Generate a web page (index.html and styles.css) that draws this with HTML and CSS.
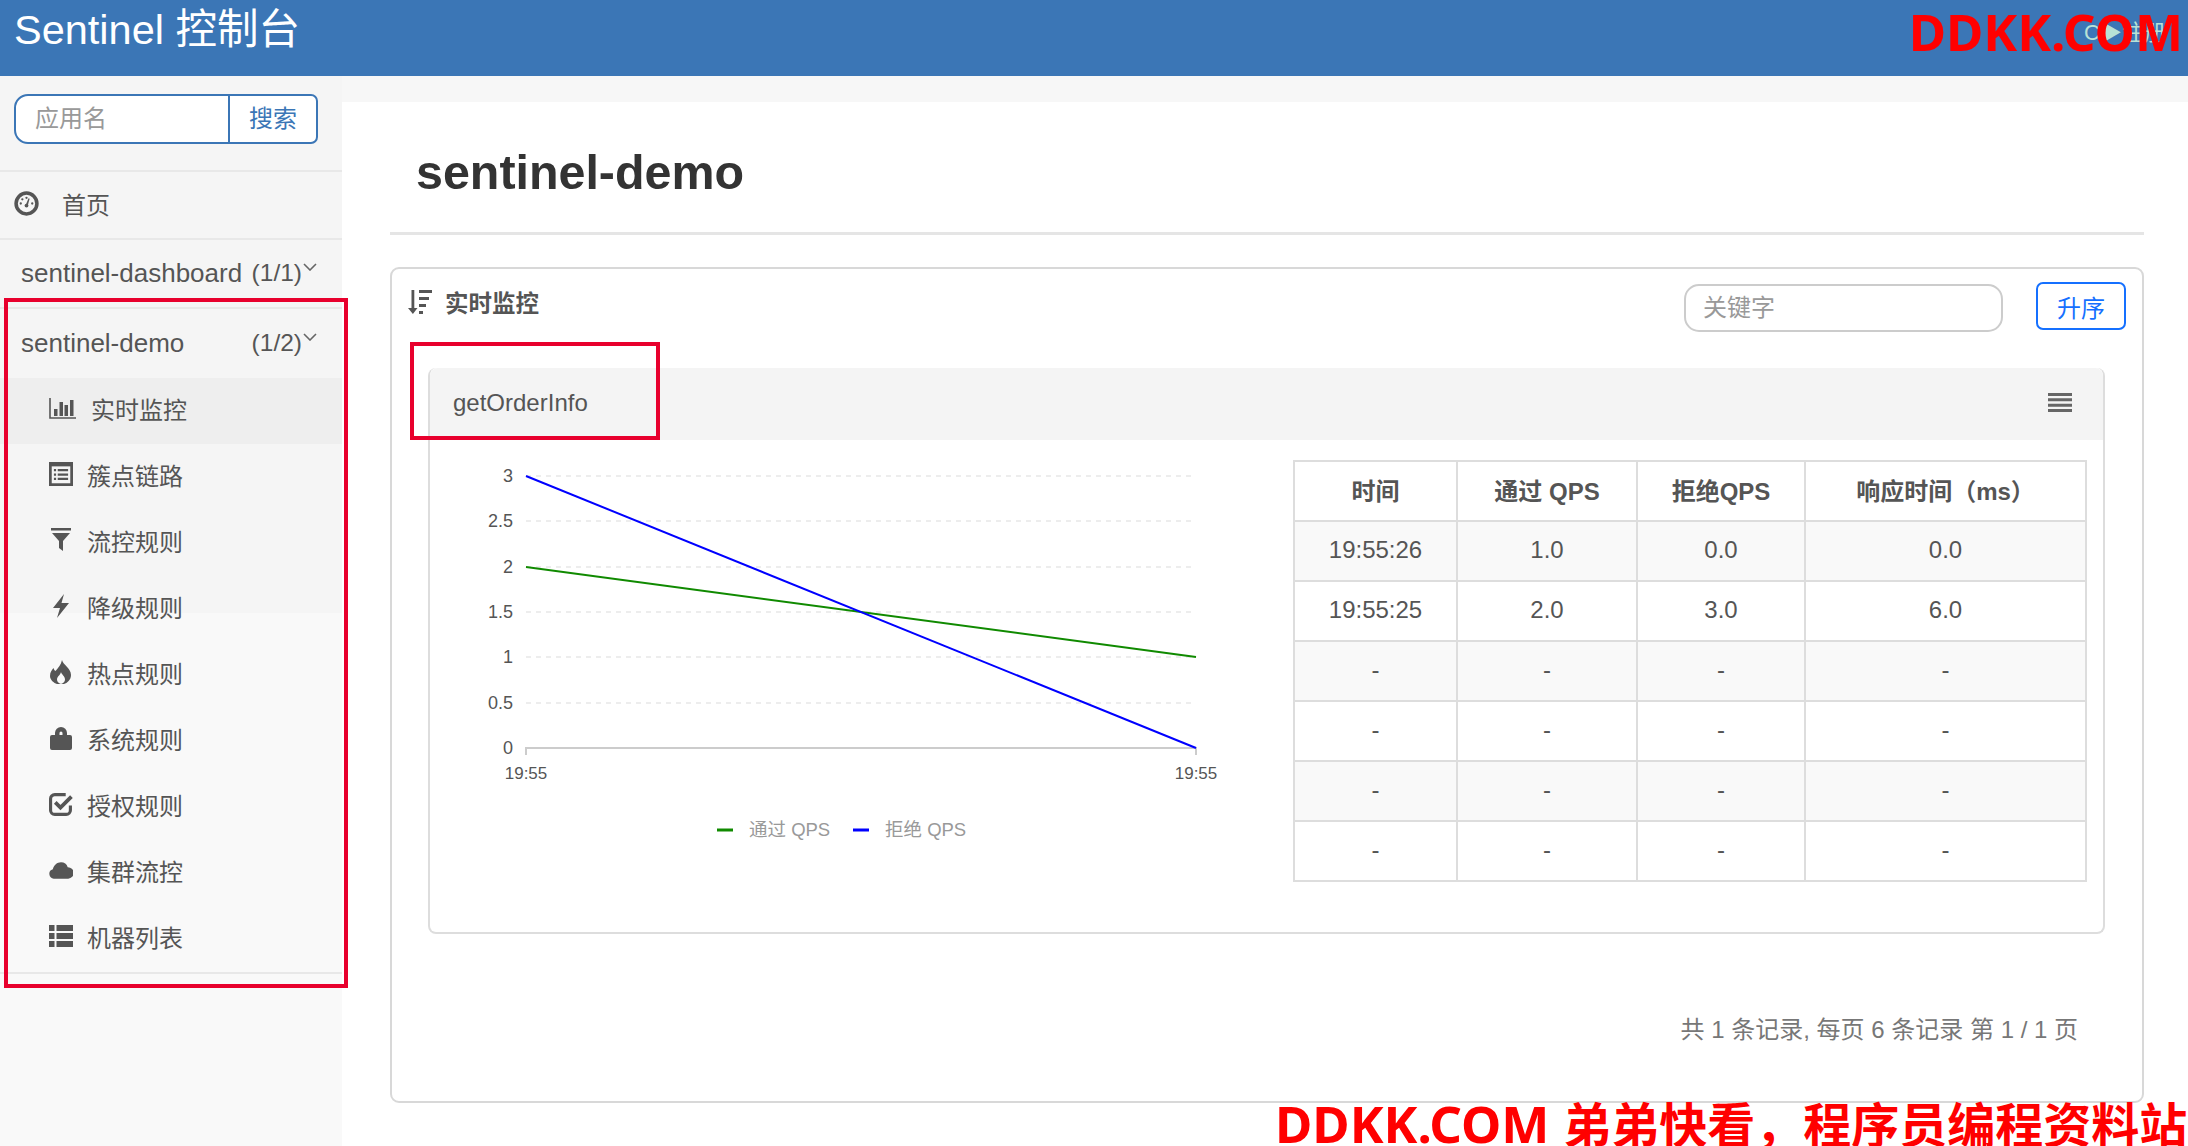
FILE: index.html
```html
<!DOCTYPE html>
<html lang="zh">
<head>
<meta charset="utf-8">
<title>Sentinel 控制台</title>
<link rel="stylesheet" href="styles.css">
</head>
<body>
<header class="topbar">
  <div class="brand">Sentinel 控制台</div>
  <div class="faint">C▶注册</div>
</header>
<div class="layout">
  <aside class="sidebar">
    <div class="search-wrap">
      <div class="search">
        <div class="search-input">应用名</div>
        <div class="search-btn">搜索</div>
      </div>
    </div>
    <div class="home">
      <svg class="home-icon" viewBox="0 0 24 24"><circle cx="12" cy="12" r="10" fill="none" stroke="#555" stroke-width="3.4"/><path d="M11 14l3-7 1 .4-2 7.2z" fill="#555"/><circle cx="12" cy="14" r="1.8" fill="#555"/><circle cx="6.5" cy="12" r="1.1" fill="#555"/><circle cx="8" cy="8" r="1.1" fill="#555"/><circle cx="12" cy="6.5" r="1.1" fill="#555"/><circle cx="17.5" cy="12" r="1.1" fill="#555"/></svg>
      <span>首页</span>
    </div>
    <div class="app app-first">
      <span class="app-name">sentinel-dashboard</span><span class="app-count">(1/1)</span>
      <svg class="chev" viewBox="0 0 14 8"><path d="M1 1l6 6 6-6" fill="none" stroke="#666" stroke-width="1.6"/></svg>
    </div>
    <div class="app app-second">
      <span class="app-name">sentinel-demo</span><span class="app-count">(1/2)</span>
      <svg class="chev" viewBox="0 0 14 8"><path d="M1 1l6 6 6-6" fill="none" stroke="#666" stroke-width="1.6"/></svg>
    </div>
    <ul class="menu">
      <li class="item item-active">
        <svg class="ico ico-wide" viewBox="0 0 27 21"><path d="M1 0v20h26" fill="none" stroke="#555" stroke-width="1.6"/><path d="M5 11h3.500v7H5zM10.500 4h3.500v14h-3.500zM15.500 7H19v11h-3.500zM21 2h3.500v16H21z" fill="#555"/></svg>
        <span>实时监控</span>
      </li>
      <li class="item">
        <svg class="ico" viewBox="0 0 22 22"><path d="M0 0h22v22H0z" fill="#555"/><path d="M2.500 4h17v15.500h-17z" fill="#f5f5f5"/><path d="M4.500 6.500h2v2h-2zM8 6.500h9.500v2H8zM4.500 10.500h2v2h-2zM8 10.500h9.500v2H8zM4.500 14.500h2v2h-2zM8 14.500h9.500v2H8z" fill="#555"/></svg>
        <span>簇点链路</span>
      </li>
      <li class="item">
        <svg class="ico" viewBox="0 0 22 24"><path d="M1 0h20v2.500H1zM2 5h18l-7 8v10l-4-3v-7z" fill="#555"/></svg>
        <span>流控规则</span>
      </li>
      <li class="item">
        <svg class="ico" viewBox="0 0 22 24"><path d="M14 0L3 14h7l-3 10 12-15h-7.500z" fill="#555"/></svg>
        <span>降级规则</span>
      </li>
      <li class="item">
        <svg class="ico" viewBox="0 0 22 24"><path d="M12 0c1 5 9 8 9 15 0 5-4 8-7 9H7c-3-1-7-4-7-8 0-4 2-6 3.500-8 .5 1.500 1 2.500 2 3C8 8 11 5 12 0z" fill="#555"/><path d="M11 12c.5 2.500 4 4 4 7.500 0 2-1.500 3.500-4 4.500-2.500-1-4-2.500-4-4.500 0-3 3.500-4.500 4-7.500z" fill="#f9f9f9"/></svg>
        <span>热点规则</span>
      </li>
      <li class="item">
        <svg class="ico" viewBox="0 0 22 24"><path d="M5 9V7a6 6 0 0 1 12 0v2h3a2 2 0 0 1 2 2v11a2 2 0 0 1-2 2H2a2 2 0 0 1-2-2V11a2 2 0 0 1 2-2zm4.500 0h3V7a1.500 1.500 0 0 0-3 0z" fill="#555"/></svg>
        <span>系统规则</span>
      </li>
      <li class="item">
        <svg class="ico" viewBox="0 0 23 23"><path d="M20.500 13v4.500a4 4 0 0 1-4 4h-11a4 4 0 0 1-4-4v-11a4 4 0 0 1 4-4H16" fill="none" stroke="#555" stroke-width="3"/><path d="M6 10l5 5L21.500 4.500" fill="none" stroke="#555" stroke-width="3.600"/></svg>
        <span>授权规则</span>
      </li>
      <li class="item">
        <svg class="ico ico-cloud" viewBox="0 0 25 17"><path d="M5 17a5 5 0 0 1-1-9.800C5 3 8.500 0 12.500 0c3.500 0 6 2 7 5A6 6 0 0 1 20 17z" fill="#555"/></svg>
        <span>集群流控</span>
      </li>
      <li class="item">
        <svg class="ico" viewBox="0 0 24 22"><path d="M0 0h5.500v6H0zM7.500 0H24v6H7.500zM0 8h5.500v6H0zM7.500 8H24v6H7.500zM0 16h5.500v6H0zM7.500 16H24v6H7.500z" fill="#555"/></svg>
        <span>机器列表</span>
      </li>
    </ul>
  </aside>
  <main class="main">
    <div class="content">
      <h1 class="page-title">sentinel-demo</h1>
      <section class="card">
        <div class="card-head">
          <svg class="sort-icon" viewBox="0 0 24 24"><path d="M3.500 0h2.800v18h3.200L4.900 24 0 18h3.500zM11 0h13v3H11zM11 7h10v3H11zM11 14h7v3h-7zM11 21h4v3h-4z" fill="#555"/></svg>
          <span class="card-title">实时监控</span>
          <div class="keyword">关键字</div>
          <div class="sort-btn">升序</div>
        </div>
        <div class="panel">
          <div class="panel-head">
            <span>getOrderInfo</span>
            <svg class="bars" viewBox="0 0 24 19"><path d="M0 0h24v3H0zM0 5.300h24v3H0zM0 10.700h24v3H0zM0 16h24v3H0z" fill="#666"/></svg>
          </div>
          <div class="panel-body">
            <svg class="chart" width="863" height="440" viewBox="430 440 863 440">
              <g class="grid">
                <line x1="526" y1="476" x2="1196" y2="476"/>
                <line x1="526" y1="521" x2="1196" y2="521"/>
                <line x1="526" y1="567" x2="1196" y2="567"/>
                <line x1="526" y1="612" x2="1196" y2="612"/>
                <line x1="526" y1="657" x2="1196" y2="657"/>
                <line x1="526" y1="703" x2="1196" y2="703"/>
              </g>
              <path class="axis" d="M526 755V748H1196V755"/>
              <g class="y-labels">
                <text x="513" y="482">3</text>
                <text x="513" y="527">2.5</text>
                <text x="513" y="573">2</text>
                <text x="513" y="618">1.5</text>
                <text x="513" y="663">1</text>
                <text x="513" y="709">0.5</text>
                <text x="513" y="754">0</text>
              </g>
              <text class="x-label" x="526" y="779">19:55</text>
              <text class="x-label" x="1196" y="779">19:55</text>
              <line class="pass" x1="526" y1="567" x2="1196" y2="657"/>
              <line class="block" x1="526" y1="476" x2="1196" y2="748"/>
              <line class="pass legend-mark" x1="717" y1="830" x2="733" y2="830"/>
              <text class="legend" x="749" y="836">通过 QPS</text>
              <line class="block legend-mark" x1="853" y1="830" x2="869" y2="830"/>
              <text class="legend" x="885" y="836">拒绝 QPS</text>
            </svg>
            <table class="table">
              <colgroup><col class="c1"><col class="c2"><col class="c3"><col class="c4"></colgroup>
              <thead><tr><th>时间</th><th>通过 QPS</th><th>拒绝QPS</th><th>响应时间（ms）</th></tr></thead>
              <tbody>
                <tr><td>19:55:26</td><td>1.0</td><td>0.0</td><td>0.0</td></tr>
                <tr><td>19:55:25</td><td>2.0</td><td>3.0</td><td>6.0</td></tr>
                <tr><td>-</td><td>-</td><td>-</td><td>-</td></tr>
                <tr><td>-</td><td>-</td><td>-</td><td>-</td></tr>
                <tr><td>-</td><td>-</td><td>-</td><td>-</td></tr>
                <tr><td>-</td><td>-</td><td>-</td><td>-</td></tr>
              </tbody>
            </table>
          </div>
        </div>
        <div class="pager">共 1 条记录, 每页 6 条记录 第 1 / 1 页</div>
      </section>
    </div>
  </main>
</div>
<div class="mark mark-box-menu"></div>
<div class="mark mark-box-res"></div>
<div class="wm wm-top">DDKK.COM</div>
<div class="wm wm-bottom">DDKK.COM<span class="wm-cjk">弟弟快看，程序员编程资料站</span></div>
</body>
</html>
```
FILE: styles.css
```css
* { box-sizing: border-box; }
html, body { margin: 0; height: 1146px; overflow: hidden; }
body {
  position: relative;
  display: flex;
  flex-direction: column;
  font-family: "Liberation Sans", "Noto Sans CJK SC", sans-serif;
  font-size: 24px;
  color: #555;
  background: #fff;
}
.topbar {
  flex: 0 0 76px;
  display: flex;
  justify-content: space-between;
  padding: 7px 22px 0 14px;
  background: #3b76b6;
  color: #fff;
}
.brand { font-size: 41.5px; line-height: 46px; }
.faint { margin-top: 2px; font-size: 22px; line-height: 48px; color: #b8e2d6; }

.layout { flex: 1; display: flex; min-height: 0; }
.sidebar {
  flex: 0 0 342px;
  background: linear-gradient(#f5f5f5 537px, #f9f9f9 537px);
}
.search-wrap {
  height: 96px;
  padding: 18px 24px 0 14px;
  border-bottom: 2px solid #e8e8e8;
}
.search {
  display: flex;
  height: 50px;
  background: #fff;
  border: 2px solid #3b76b6;
  border-radius: 14px 7px 7px 14px;
  line-height: 46px;
}
.search-input { width: 214px; padding-left: 19px; color: #999; border-right: 2px solid #3b76b6; }
.search-btn { flex: 1; text-align: center; color: #3b76b6; }
.home {
  display: flex;
  align-items: center;
  height: 68px;
  padding: 1px 0 0 14px;
  border-bottom: 2px solid #e8e8e8;
}
.home-icon { width: 25px; height: 25px; margin: -4px 23px 0 0; }
.home span { line-height: 34px; }
.app {
  position: relative;
  display: flex;
  align-items: center;
  justify-content: space-between;
  padding: 0 40px 0 21px;
  line-height: 34px;
}
.app-first { height: 69px; padding-bottom: 2px; border-bottom: 2px solid #e8e8e8; }
.app-second { height: 69px; padding-bottom: 2px; }
.app-name { font-size: 26px; }
.app-count { font-size: 24.5px; }
.chev { position: absolute; right: 25px; top: 23px; width: 14px; height: 8px; }
.app-second .chev { top: 24px; }
.menu { margin: 0; padding: 0; list-style: none; border-bottom: 2px solid #e8e8e8; }
.item {
  display: flex;
  align-items: center;
  height: 66px;
  padding: 0 0 6px 49px;
}
.item-active { background: #eee; }
.ico { flex: 0 0 24px; width: 24px; height: 24px; margin-right: 14px; }
.ico-wide { flex-basis: 27px; width: 27px; height: 21px; margin-right: 15px; }
.ico-cloud { height: 17px; }

.main { flex: 1; min-width: 0; padding-top: 26px; background: #f7f7f7; }
.content { height: 100%; padding: 0 44px 0 48px; background: #fff; }
.page-title {
  height: 133px;
  margin: 0 0 32px;
  padding-left: 26px;
  border-bottom: 3px solid #e5e5e5;
  font-size: 48.4px;
  line-height: 140px;
  font-weight: 700;
  color: #333;
}
.card {
  height: 836px;
  padding: 0 0 0 36px;
  border: 2px solid #d8d8d8;
  border-radius: 9px;
}
.card-head { display: flex; align-items: center; height: 99px; padding: 0 16px 0 0; }
.sort-icon { width: 24px; height: 24px; margin: -34px 13px 0 -20px; }
.card-title { flex: 1; margin-top: -34px; font-weight: 700; font-size: 23.5px; }
.keyword {
  width: 319px;
  height: 48px;
  margin: -22px 33px 0 0;
  padding-left: 17px;
  border: 2px solid #ccc;
  border-radius: 15px;
  line-height: 44px;
  color: #999;
}
.sort-btn {
  width: 90px;
  height: 48px;
  margin-top: -26px;
  border: 2px solid #1570ff;
  border-radius: 7px;
  line-height: 50px;
  text-align: center;
  color: #1570ff;
}
.panel {
  width: 1677px;
  height: 566px;
  border: 2px solid #ddd;
  border-top: 0;
  border-radius: 8px;
}
.panel-head {
  display: flex;
  align-items: center;
  justify-content: space-between;
  height: 72px;
  padding: 0 31px 3px 23px;
  background: #f4f4f4;
  border-radius: 8px 8px 0 0;
}
.bars { width: 24px; height: 19px; }
.panel-body { display: flex; align-items: flex-start; }
.chart { flex: 0 0 auto; display: block; }
.grid line { stroke: #e8e8e8; stroke-width: 1.5; stroke-dasharray: 5 5; }
.axis { fill: none; stroke: #ccc; stroke-width: 2; }
.y-labels text { fill: #555; font-size: 18px; text-anchor: end; }
.x-label { fill: #555; font-size: 17px; text-anchor: middle; }
.pass { stroke: #108a00; stroke-width: 2; }
.block { stroke: #0000ff; stroke-width: 2; }
.legend-mark { stroke-width: 3; }
.legend { fill: #999; font-size: 18.5px; }
.table {
  width: 792px;
  margin-top: 20px;
  table-layout: fixed;
  border-collapse: collapse;
}
.c1 { width: 163px; }
.c2 { width: 180px; }
.c3 { width: 168px; }
.c4 { width: 281px; }
.table th, .table td {
  height: 60px;
  border: 2px solid #ddd;
  text-align: center;
  line-height: 34px;
}
.table th { padding: 1px 0 0; font-weight: 700; }
.table td { padding: 0 0 3px; }
.table tbody tr:nth-child(odd) td { background: #f9f9f9; }
.pager {
  margin-top: 79px;
  padding-right: 64px;
  line-height: 34px;
  text-align: right;
  color: #777;
}

.mark { position: absolute; border: 4px solid #e8002d; }
.mark-box-menu { left: 4px; top: 298px; width: 344px; height: 690px; }
.mark-box-res { left: 410px; top: 342px; width: 250px; height: 98px; }
.wm {
  position: absolute;
  font-family: "Noto Sans", "Noto Sans CJK SC", sans-serif;
  font-weight: 700;
  font-size: 51px;
  line-height: 60px;
  color: #f00;
  white-space: nowrap;
}
.wm-top { right: 5px; top: 1px; }
.wm-bottom { left: 1275px; top: 1093px; }
.wm-cjk { margin-left: 14px; font-size: 48px; }
```
